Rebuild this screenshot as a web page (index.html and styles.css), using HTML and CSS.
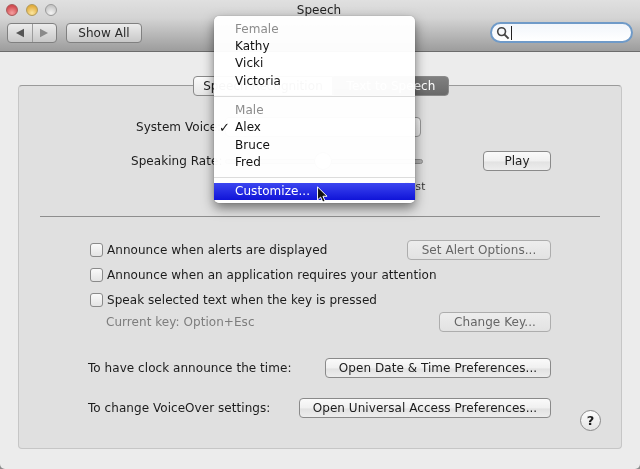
FILE: index.html
```html
<!DOCTYPE html>
<html lang="en">
<head>
<meta charset="utf-8">
<title>Speech</title>
<link rel="stylesheet" href="styles.css">
</head>
<body>
<div class="window">
  <header class="toolbar">
    <div class="titlerow">
      <div class="lights">
        <span class="light red"></span><span class="light yellow"></span><span class="light grey"></span>
      </div>
      <div class="title">Speech</div>
    </div>
    <div class="toolrow">
      <div class="segment">
        <span class="seg"><svg width="10" height="10" viewBox="0 0 10 10"><path d="M1 5 9 .8v8.4z" fill="#555"/></svg></span>
        <span class="seg"><svg width="10" height="10" viewBox="0 0 10 10"><path d="M9 5 1 .8v8.4z" fill="#8a8a8a"/></svg></span>
      </div>
      <div class="btn showall">Show All</div>
      <div class="search">
        <svg width="14" height="14" viewBox="0 0 14 14"><circle cx="5.6" cy="5.6" r="3.9" fill="none" stroke="#444" stroke-width="1.6"/><path d="M8.6 8.6 12.6 12.6" stroke="#444" stroke-width="2"/></svg>
        <span class="caret"></span>
      </div>
    </div>
  </header>

  <main class="panel">
    <div class="tabs">
      <div class="tab tab-on">Speech Recognition</div>
      <div class="tab tab-off">Text to Speech</div>
    </div>

    <div class="row voice-row">
      <span class="voice-label">System Voice:</span>
      <div class="popup"></div>
    </div>
    <div class="row rate-row">
      <span class="rate-label">Speaking Rate:</span>
      <div class="slider"><span class="thumb"></span></div>
      <div class="btn play">Play</div>
    </div>
    <div class="fast-row"><span>Fast</span></div>

    <hr class="divider">

    <div class="row check-row first">
      <label class="check"><span class="box"></span>Announce when alerts are displayed</label>
      <div class="btn off alert">Set Alert Options...</div>
    </div>
    <div class="row check-row">
      <label class="check"><span class="box"></span>Announce when an application requires your attention</label>
    </div>
    <div class="row check-row">
      <label class="check"><span class="box"></span>Speak selected text when the key is pressed</label>
    </div>
    <div class="row key-row">
      <span class="muted">Current key: Option+Esc</span>
      <div class="btn off changekey">Change Key...</div>
    </div>

    <div class="row link-row clock">
      <span>To have clock announce the time:</span>
      <div class="btn datetime">Open Date &amp; Time Preferences...</div>
    </div>
    <div class="row link-row vo">
      <span>To change VoiceOver settings:</span>
      <div class="btn access">Open Universal Access Preferences...</div>
    </div>
    <div class="help">?</div>
  </main>

  <div class="menu">
    <div class="item head">Female</div>
    <div class="item">Kathy</div>
    <div class="item">Vicki</div>
    <div class="item">Victoria</div>
    <div class="sep"></div>
    <div class="item head">Male</div>
    <div class="item checked">Alex</div>
    <div class="item">Bruce</div>
    <div class="item">Fred</div>
    <div class="sep"></div>
    <div class="item hot">Customize...</div>
  </div>
  <svg class="cursor" width="13" height="18" viewBox="0 0 14 20"><path d="M1.5 1v14.5l3.4-3.2 2.4 5.6 2.6-1.1-2.4-5.4h4.6z" fill="#111" stroke="#fff" stroke-width="1.1"/></svg>
</div>
</body>
</html>
```
FILE: styles.css
```css
* { box-sizing: border-box; }
html, body { margin: 0; padding: 0; background: #8c8c8c; }
body { width: 640px; height: 469px; overflow: hidden; font-family: "DejaVu Sans", sans-serif; font-size: 12px; letter-spacing: 0.05px; color: #1c1c1c; }
.window { position: relative; width: 640px; height: 469px; background: #ececec; border-radius: 0 0 5px 5px; overflow: hidden; filter: blur(0.35px); }

.toolbar { height: 52px; background: linear-gradient(#e0e0e0, #d4d4d4 35%, #9f9f9f 97%); border-bottom: 1px solid #6c6c6c; padding: 0 7px; }
.titlerow { position: relative; height: 23px; display: flex; justify-content: center; padding-top: 3px; }
.title { margin-left: -2px; color: #222; }
.lights { position: absolute; left: -1px; top: 4px; display: flex; gap: 7.5px; }
.light { width: 12px; height: 12px; border-radius: 50%; border: 1px solid #9a9a9a; }
.red { background: radial-gradient(circle at 50% 80%, #f5a0a0, #d24a50 75%); border-color: #a85a5a; }
.yellow { background: radial-gradient(circle at 50% 80%, #fbe6a0, #e2ac3c 75%); border-color: #b09a5a; }
.grey { background: radial-gradient(circle at 50% 80%, #f4f4f4, #c6c6c6 75%); }

.toolrow { display: flex; height: 20px; }
.segment { width: 50px; height: 20px; display: flex; border: 1px solid #808080; border-radius: 4px; background: linear-gradient(#ececec, #c8c8c8); }
.seg { flex: 1; display: flex; align-items: center; justify-content: center; }
.seg + .seg { border-left: 1px solid #9c9c9c; }
.btn { height: 20px; display: flex; align-items: center; justify-content: center; border: 1px solid #8a8a8a; border-radius: 4px; background: linear-gradient(#fafafa, #f0f0f0 50%, #e2e2e2 55%, #ededed); white-space: nowrap; }
.showall { margin-left: 9px; width: 76px; background: linear-gradient(#ececec, #c8c8c8); border-color: #808080; color: #2a2a2a; }
.search { margin-left: auto; margin-top: -1px; width: 143px; height: 21px; border: 2px solid #6f9ac8; border-radius: 11px; background: linear-gradient(#f2f6fb, #fff); display: flex; align-items: center; padding-left: 4px; }
.caret { width: 1px; height: 14px; background: #222; margin-left: 1px; }

.panel { position: absolute; left: 18px; top: 85px; width: 604px; height: 364px; background: #e0e0e0; border: 1px solid #c6c6c6; border-top-color: #9a9a9a; border-radius: 4px; padding: 0 20px 0 21px; }
.tabs { display: flex; margin: -10px 0 0 153px; width: 256px; height: 20px; }
.tab { height: 20px; display: flex; align-items: center; justify-content: center; border: 1px solid #8a8a8a; }
.tab-on { width: 140px; border-radius: 4px 0 0 4px; background: linear-gradient(#fbfbfb, #e6e6e6); }
.tab-off { flex: 1; border-radius: 0 4px 4px 0; background: linear-gradient(#808080, #6a6a6a); color: #fff; }

.row { display: flex; align-items: center; }
.voice-row { margin-top: 21px; height: 20px; padding-left: 96px; }
.voice-label { width: 79px; white-space: nowrap; }
.rate-label { width: 84px; white-space: nowrap; }
.popup { margin-left: 10px; width: 196px; height: 20px; border: 1px solid #999; border-radius: 4px; background: linear-gradient(#fafafa, #e6e6e6); }
.rate-row { margin-top: 14px; height: 20px; padding-left: 91px; padding-right: 50px; }
.slider { position: relative; margin-left: 10px; width: 198px; height: 5px; background: #b0b0b0; border-radius: 3px; border: 1px solid #8c8c8c; }
.thumb { position: absolute; left: 88px; top: -8px; width: 18px; height: 18px; border-radius: 50%; background: #f4f4f4; border: 1px solid #888; }
.play { margin-left: auto; width: 68px; }
.fast-row { height: 14px; margin-top: 8px; padding-left: 364px; font-size: 10.5px; color: #333; line-height: 14px; }

.divider { margin: 23px 0 0; height: 1px; border: 0; background: #8e8e8e; width: 560px; }

.check-row { height: 20px; margin-top: 5px; padding: 0 50px 0 50px; justify-content: space-between; }
.check-row.first { margin-top: 23px; }
.check { display: flex; align-items: center; white-space: nowrap; }
.box { width: 13px; height: 14px; margin-right: 4px; border: 1px solid #8a8a8a; border-radius: 3px; background: linear-gradient(#fafafa, #e4e4e4); }
.btn.off { color: #666; border-color: #adadad; background: linear-gradient(#ededed, #e2e2e2); }
.alert { width: 144px; }
.changekey { width: 112px; }
.key-row { height: 20px; margin-top: 2px; padding: 0 50px 0 66px; justify-content: space-between; }
.muted { color: #7d7d7d; }

.link-row { height: 20px; padding: 0 50px 0 48px; justify-content: space-between; }
.clock { margin-top: 26px; }
.vo { margin-top: 20px; }
.datetime { width: 226px; }
.access { width: 252px; }
.help { position: absolute; left: 561px; top: 324px; width: 21px; height: 21px; border-radius: 50%; border: 1px solid #8a8a8a; background: linear-gradient(#fdfdfd, #e4e4e4); display: flex; align-items: center; justify-content: center; font-weight: bold; font-size: 13px; }

.menu { position: absolute; left: 214px; top: 16px; width: 201px; height: 187px; padding-top: 4.5px; background: rgba(255,255,255,0.97); border-radius: 5px; box-shadow: 0 5px 12px rgba(0,0,0,0.5), 0 0 1px rgba(0,0,0,0.4); }
.item { position: relative; height: 17.4px; line-height: 17.4px; padding-left: 21px; color: #111; }
.head { color: #8c8c8c; }
.checked::before { content: "\2713"; position: absolute; left: 5px; font-weight: bold; font-size: 13px; }
.sep { height: 1px; margin: 5.5px 0; background: #dcdcdc; }
.hot { margin-top: -1px; background: linear-gradient(#3c46f0, #1014d8); color: #fff; height: 17px; line-height: 16px; }
.cursor { position: absolute; left: 316px; top: 186px; }
```
